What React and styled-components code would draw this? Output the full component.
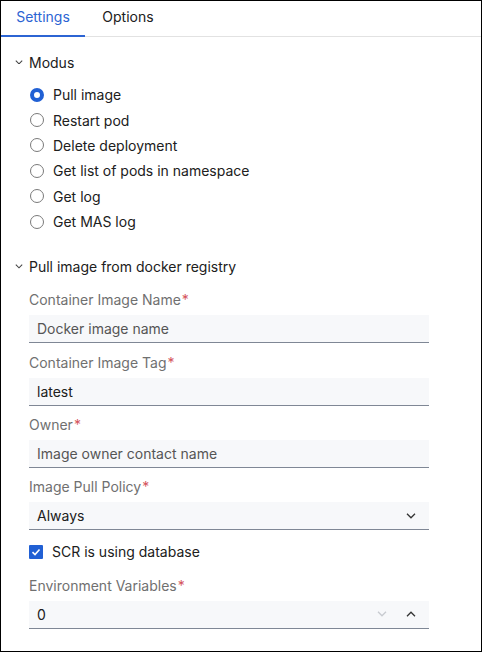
import React, { useState } from "react";
import styled, { createGlobalStyle } from "styled-components";

const GlobalStyle = createGlobalStyle`
  html, body {
    margin: 0;
    padding: 0;
    background: #fff;
  }
  body {
    font-family: Inter, "Noto Sans", "Liberation Sans", sans-serif;
    font-size: 14px;
    color: #303030;
  }
  * {
    box-sizing: border-box;
  }
`;

const Frame = styled.div`
  width: 482px;
  height: 652px;
  border: 1px solid #000;
  overflow: hidden;
  background: #fff;
`;

const TabBar = styled.div`
  display: flex;
  height: 36px;
  border-bottom: 1px solid #e2e2e2;
`;

const Tab = styled.div`
  display: flex;
  align-items: center;
  justify-content: center;
  width: ${(p) => p.$width}px;
  height: 36px;
  font-size: 14px;
  color: ${(p) => (p.$active ? "#2c64d3" : "#202020")};
  border-bottom: 2px solid ${(p) => (p.$active ? "#2c64d3" : "transparent")};
  padding-bottom: 3px;
  margin-bottom: -1px;
`;

const Body = styled.div`
  padding: 13px 0 0 14px;
`;

const SectionHeader = styled.div`
  display: flex;
  align-items: center;
  gap: 6px;
  height: 24px;
  font-size: 14px;
  color: #202020;
`;

const RadioList = styled.div`
  display: flex;
  flex-direction: column;
  padding: 8px 0 0 15px;
  margin-bottom: 20px;
`;

const RadioRow = styled.label`
  display: flex;
  align-items: center;
  gap: 9px;
  height: 25.4px;
  color: #202020;
`;

const RadioDot = styled.span`
  width: 14px;
  height: 14px;
  border-radius: 50%;
  border: ${(p) => (p.$checked ? "4px solid #2160d4" : "1px solid #7a7a7a")};
  background: #fff;
  flex: none;
`;

const Form = styled.div`
  display: flex;
  flex-direction: column;
  padding: 13px 0 0 14px;
  width: 414px;
`;

const Field = styled.div`
  display: flex;
  flex-direction: column;
  margin-bottom: 10.3px;
`;

const Label = styled.div`
  height: 18px;
  line-height: 18px;
  color: #707070;
  margin-bottom: 6px;
`;

const Req = styled.span`
  color: #d4545c;
  margin-left: 1px;
`;

const Input = styled.div`
  display: flex;
  align-items: center;
  height: 28px;
  padding: 0 8px;
  background: #f7f8fa;
  border-bottom: 1px solid #7f8795;
  color: ${(p) => (p.$placeholder ? "#555" : "#202020")};
`;

const InputText = styled.span`
  flex: 1;
`;

const IconSlot = styled.span`
  display: flex;
  align-items: center;
  justify-content: center;
  width: 24px;
  margin-left: ${(p) => p.$gap || 0}px;
  margin-right: -2px;
`;

const CheckRow = styled.label`
  display: flex;
  align-items: center;
  gap: 9px;
  height: 20px;
  margin: 1px 0 15px 0;
  color: #202020;
`;

const CheckBox = styled.span`
  display: flex;
  align-items: center;
  justify-content: center;
  width: 14px;
  height: 14px;
  background: #2160d4;
  border-radius: 1px;
  flex: none;
`;

const Chevron = ({ up, color = "#333", size = 10 }) => (
  <svg width={size} height={size * 0.6} viewBox="0 0 10 6" fill="none">
    <path
      d={up ? "M1 5.2L5 1.2L9 5.2" : "M1 0.8L5 4.8L9 0.8"}
      stroke={color}
      strokeWidth="1.3"
    />
  </svg>
);

const options = [
  "Pull image",
  "Restart pod",
  "Delete deployment",
  "Get list of pods in namespace",
  "Get log",
  "Get MAS log",
];

export default function App() {
  const [mode, setMode] = useState(0);
  return (
    <>
      <GlobalStyle />
      <Frame>
        <TabBar>
          <Tab $active $width={84}>Settings</Tab>
          <Tab $width={86}>Options</Tab>
        </TabBar>
        <Body>
          <SectionHeader>
            <Chevron color="#444" size={8} />
            Modus
          </SectionHeader>
          <RadioList>
            {options.map((o, i) => (
              <RadioRow key={o} onClick={() => setMode(i)}>
                <RadioDot $checked={mode === i} />
                {o}
              </RadioRow>
            ))}
          </RadioList>
          <SectionHeader>
            <Chevron color="#444" size={8} />
            Pull image from docker registry
          </SectionHeader>
          <Form>
            <Field>
              <Label>
                Container Image Name<Req>*</Req>
              </Label>
              <Input $placeholder>
                <InputText>Docker image name</InputText>
              </Input>
            </Field>
            <Field>
              <Label>
                Container Image Tag<Req>*</Req>
              </Label>
              <Input>
                <InputText>latest</InputText>
              </Input>
            </Field>
            <Field>
              <Label>
                Owner<Req>*</Req>
              </Label>
              <Input $placeholder>
                <InputText>Image owner contact name</InputText>
              </Input>
            </Field>
            <Field>
              <Label>
                Image Pull Policy<Req>*</Req>
              </Label>
              <Input>
                <InputText>Always</InputText>
                <IconSlot>
                  <Chevron />
                </IconSlot>
              </Input>
            </Field>
            <CheckRow>
              <CheckBox>
                <svg width="10" height="8" viewBox="0 0 10 8" fill="none">
                  <path d="M1.5 4.2L4 6.5L8.5 1.5" stroke="#fff" strokeWidth="1.6" />
                </svg>
              </CheckBox>
              SCR is using database
            </CheckRow>
            <Field>
              <Label>
                Environment Variables<Req>*</Req>
              </Label>
              <Input>
                <InputText>0</InputText>
                <IconSlot>
                  <Chevron color="#c8cbd0" />
                </IconSlot>
                <IconSlot $gap={7}>
                  <Chevron up />
                </IconSlot>
              </Input>
            </Field>
          </Form>
        </Body>
      </Frame>
    </>
  );
}
